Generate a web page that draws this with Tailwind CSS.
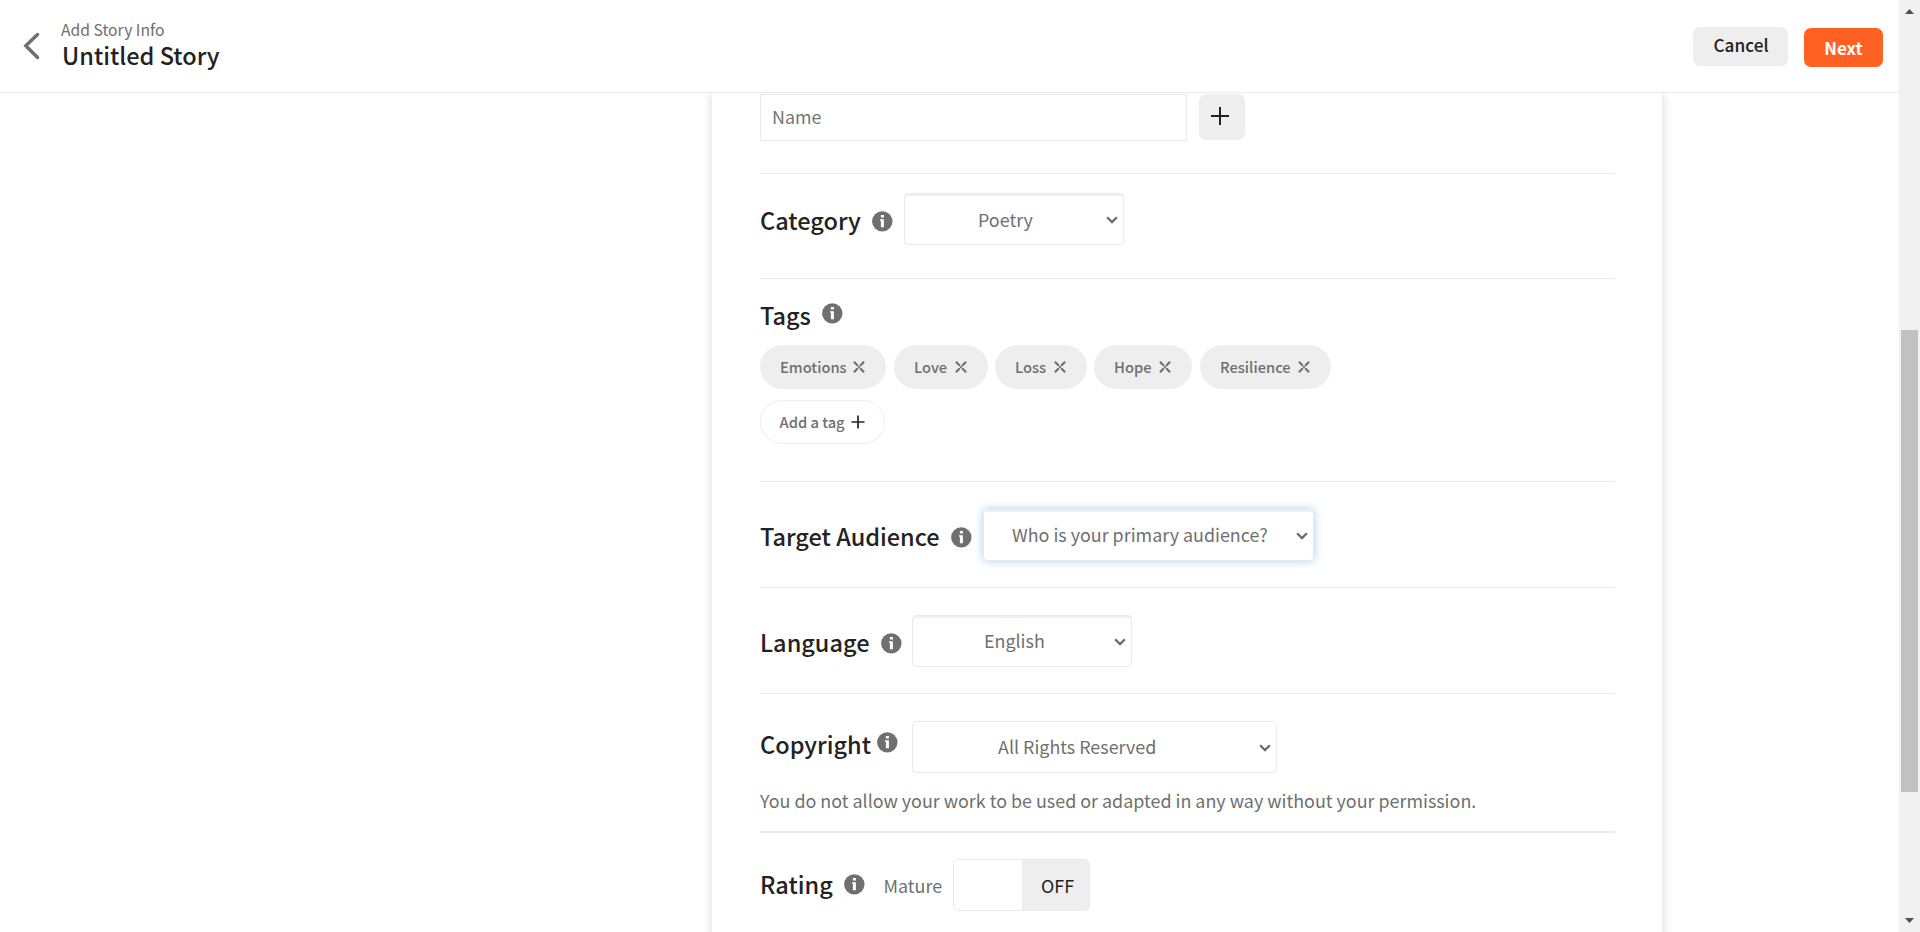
<!DOCTYPE html>
<html lang="en">
<head>
<meta charset="utf-8">
<title>Untitled Story</title>
<script src="https://cdn.jsdelivr.net/npm/@tailwindcss/browser@4"></script>
</head>
<body class="flex h-[932px] overflow-hidden bg-white font-['Noto_Sans_CJK_SC','Noto_Sans',sans-serif] text-[17.9px] leading-6 text-[#6f6f6f] whitespace-nowrap">
<svg class="hidden">
  <symbol id="info" viewBox="0 0 21 21"><circle cx="10.3" cy="10.4" r="10.2" fill="#6f6f6f"/><path d="M8.9 4h3v2.5h-3zM8 8.2h3.9v8.1h-3V9.8H8z" fill="#fff"/></symbol>
  <symbol id="caret" viewBox="0 0 12 8"><path d="M1.1 1.2 6 6.1l4.9-4.9" fill="none" stroke="#6a6a6a" stroke-width="2.2"/></symbol>
  <symbol id="cross" viewBox="0 0 12 12"><path d="M.9.8 4.6 4.4M11.1.8 7.4 4.4M.9 11.2l3.7-3.6M11.1 11.2 7.4 7.6" fill="none" stroke="#6f6f6f" stroke-width="2.1"/><path d="M4.2 4 7.8 8M7.8 4 4.2 8" stroke="#6f6f6f" stroke-width="1.1"/></symbol>
</svg>

<div class="flex w-[1899px] flex-col">
  <header class="flex h-[93px] shrink-0 items-start border-b border-[#eaeaea] bg-white">
    <svg class="ml-[23px] mt-8 h-7 w-[17px]" viewBox="0 0 17 28"><path d="M14.5 2.5 2.8 13.8l11.7 11.7" fill="none" stroke="#6f6f6f" stroke-width="3.4" stroke-linecap="round" stroke-linejoin="miter"/></svg>
    <div class="ml-[21px] mt-[18px] w-[300px]">
      <div class="text-[15.7px] leading-6">Add Story Info</div>
      <h1 class="ml-px mt-px text-[23.5px] leading-6 font-medium text-[#222]">Untitled Story</h1>
    </div>
    <button class="ml-auto mt-[27px] h-[39px] w-[95px] rounded-[7px] bg-[#eee] pb-[3px] pl-px text-[17.2px] leading-6 font-medium text-[#222]">Cancel</button>
    <button class="ml-4 mr-4 mt-7 h-[39px] w-[79px] rounded-[7px] bg-[#ff6122] text-[16.9px] leading-6 font-bold text-white">Next</button>
  </header>

  <main class="flex-1 overflow-hidden">
    <div class="ml-[712px] h-[900px] w-[950px] bg-white pl-12 shadow-[0_0_10px_rgba(0,0,0,0.16)]">
      <div class="w-[855px]">

        <section class="flex h-[81px] items-start border-b border-[#eaeaea] pt-px">
          <div class="h-[47px] w-[427px] border border-[#eaeaea] pl-[11px] pt-[9px] text-[#757575]">Name</div>
          <button class="ml-3 flex h-[46px] w-[46px] items-start justify-center rounded-[7px] bg-[#eee] pt-[13px]">
            <svg class="ml-[-4px] h-[18px] w-[18px]" viewBox="0 0 18 18"><path d="M9 0v18M0 9h18" stroke="#222" stroke-width="2"/></svg>
          </button>
        </section>

        <section class="flex h-[105px] items-start border-b border-[#eaeaea]">
          <h2 class="mt-[34px] w-[112px] text-[23.5px] font-medium text-[#222]">Category</h2>
          <svg class="mt-[37px] h-[21px] w-[21px]"><use href="#info"/></svg>
          <div class="ml-[11px] mt-[19px] flex h-[52px] w-[220px] items-start rounded-[4px] border border-[#eaeaea] pl-[73px] pr-[5px] pt-[13px] shadow-[inset_0_2px_0_#f0f0f0]">
            <span>Poetry</span><svg class="ml-auto mt-[9px] h-2 w-3"><use href="#caret"/></svg>
          </div>
        </section>

        <section class="h-[203px] border-b border-[#eaeaea] pt-6">
          <div class="flex items-start">
            <h2 class="w-[62px] text-[23.5px] font-medium text-[#222]">Tags</h2>
            <svg class="h-[21px] w-[21px]"><use href="#info"/></svg>
          </div>
          <div class="mt-[18px] flex text-[14.7px] font-medium">
            <div class="flex h-11 w-[126px] items-center rounded-[22px] bg-[#eee] pb-px pl-5 pr-[21px]">Emotions<svg class="ml-auto h-3 w-3"><use href="#cross"/></svg></div>
            <div class="ml-2 flex h-11 w-[94px] items-center rounded-[22px] bg-[#eee] pb-px pl-5 pr-[21px]">Love<svg class="ml-auto h-3 w-3"><use href="#cross"/></svg></div>
            <div class="ml-[7px] flex h-11 w-[92px] items-center rounded-[22px] bg-[#eee] pb-px pl-5 pr-[21px]">Loss<svg class="ml-auto h-3 w-3"><use href="#cross"/></svg></div>
            <div class="ml-[7px] flex h-11 w-[98px] items-center rounded-[22px] bg-[#eee] pb-px pl-5 pr-[21px]">Hope<svg class="ml-auto h-3 w-3"><use href="#cross"/></svg></div>
            <div class="ml-2 flex h-11 w-[131px] items-center rounded-[22px] bg-[#eee] pb-px pl-5 pr-[21px]">Resilience<svg class="ml-auto h-3 w-3"><use href="#cross"/></svg></div>
          </div>
          <div class="mt-[11px] flex h-11 w-[125px] items-center rounded-[22px] border border-[#eee] pl-[18.5px] pr-[19px] text-[14.7px] font-medium">Add a tag<svg class="ml-auto h-[14px] w-[14px]" viewBox="0 0 14 14"><path d="M7 .5v13M.5 7h13" stroke="#222" stroke-width="1.7"/></svg></div>
        </section>

        <section class="flex h-[106px] items-start border-b border-[#eaeaea]">
          <h2 class="mt-[42px] w-[191px] text-[23.5px] font-medium text-[#222]">Target Audience</h2>
          <svg class="mt-[45px] h-[21px] w-[21px]"><use href="#info"/></svg>
          <div class="ml-[11px] mt-[27px] flex h-[52px] w-[331px] items-start rounded-[4px] border border-[#eaeaea] pl-[28px] pr-[5px] pt-[12px] shadow-[inset_0_2px_0_#f0f0f0,0_0_9px_rgba(102,175,233,0.6)]">
            <span>Who is your primary audience?</span><svg class="ml-auto mt-[10px] h-2 w-3"><use href="#caret"/></svg>
          </div>
        </section>

        <section class="flex h-[106px] items-start border-b border-[#eaeaea]">
          <h2 class="mt-[42px] w-[120.5px] text-[23.5px] font-medium text-[#222]">Language</h2>
          <svg class="mt-[45px] h-[21px] w-[21px]"><use href="#info"/></svg>
          <div class="ml-[10.5px] mt-[27px] flex h-[52px] w-[220px] items-start rounded-[4px] border border-[#eaeaea] pl-[71px] pr-[5px] pt-[12px] shadow-[inset_0_2px_0_#f0f0f0]">
            <span>English</span><svg class="ml-auto mt-[10px] h-2 w-3"><use href="#caret"/></svg>
          </div>
        </section>

        <section class="h-[139px] border-b-2 border-[#eaeaea]">
          <div class="flex h-[79px] items-start">
            <h2 class="mt-[38px] w-[117px] text-[23.5px] font-medium text-[#222]">Copyright</h2>
            <svg class="mt-[38px] h-[21px] w-[21px]"><use href="#info"/></svg>
            <div class="ml-[14px] mt-[27px] flex h-[52px] w-[365px] items-start rounded-[4px] border border-[#eaeaea] pl-[85px] pr-[5px] pt-[12px]">
              <span>All Rights Reserved</span><svg class="ml-auto mt-[10px] h-2 w-3"><use href="#caret"/></svg>
            </div>
          </div>
          <p class="mt-[15px]">You do not allow your work to be used or adapted in any way without your permission.</p>
        </section>

        <section class="flex items-start">
          <h2 class="mt-[39px] w-[84px] text-[23.5px] font-medium text-[#222]">Rating</h2>
          <svg class="mt-[41px] h-[21px] w-[21px]"><use href="#info"/></svg>
          <span class="ml-[18.5px] mt-[40px] w-[69.5px]">Mature</span>
          <div class="mt-[26px] flex h-[52px] w-[137px] overflow-hidden rounded-[5px] border border-[#eaeaea]">
            <div class="w-[68px]"></div>
            <div class="flex-1 bg-[#eee] pl-[19px] pt-[13px] text-[#222]">OFF</div>
          </div>
        </section>
      </div>
    </div>
  </main>
</div>

<aside class="flex w-[21px] flex-col items-center bg-[#f1f1f1] pt-[9px] pb-[9px]">
  <svg class="h-[5px] w-[9px]" viewBox="0 0 9 5"><path d="M0 5 4.5 0 9 5z" fill="#505050"/></svg>
  <div class="mt-[316px] h-[462px] w-[17px] bg-[#c1c1c1]"></div>
  <svg class="mt-auto h-[5px] w-[9px]" viewBox="0 0 9 5"><path d="M0 0 4.5 5 9 0z" fill="#505050"/></svg>
</aside>
</body>
</html>
